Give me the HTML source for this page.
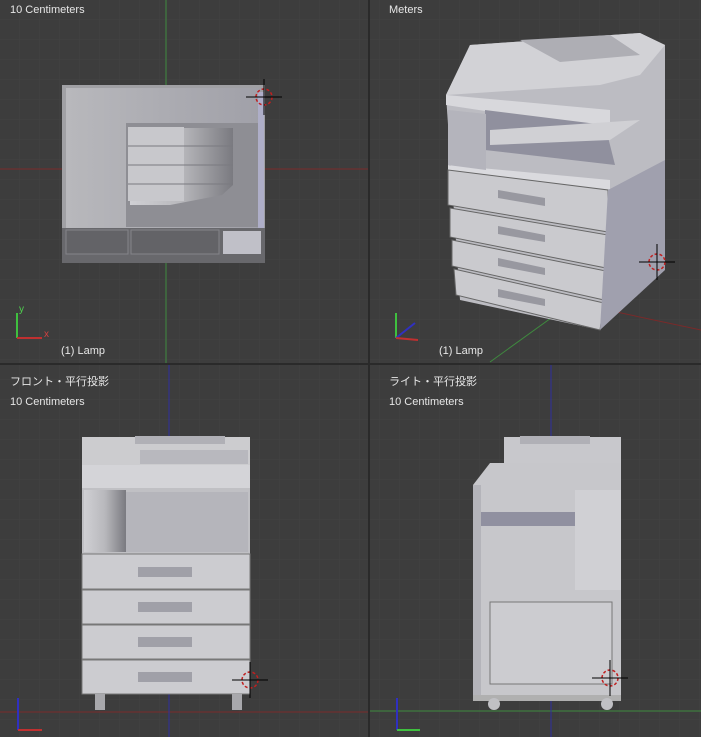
<!DOCTYPE html><html><head><meta charset="utf-8"><style>
body{margin:0;width:701px;height:737px;overflow:hidden;background:#393939;font-family:"Liberation Sans","Noto Sans CJK JP",sans-serif}
svg{display:block}
text{font-family:"Liberation Sans","Noto Sans CJK JP",sans-serif;font-size:11px;fill:#e6e6e6}
</style></head><body>
<svg width="701" height="737" viewBox="0 0 701 737">
<defs>
<pattern id="g" width="20" height="20" patternUnits="userSpaceOnUse"><path d="M20 0V20H0" fill="none" stroke="#424242" stroke-width="1"/></pattern>
<linearGradient id="bd" x1="0" y1="0" x2="1" y2="0"><stop offset="0" stop-color="#b8b8bc"/><stop offset="1" stop-color="#a0a0a8"/></linearGradient>
<linearGradient id="sh" x1="0" y1="0" x2="1" y2="0"><stop offset="0" stop-color="#d0d0d4"/><stop offset=".5" stop-color="#b8b8bc"/><stop offset="1" stop-color="#7a7a80"/></linearGradient>
</defs>
<rect width="701" height="737" fill="#3d3d3d"/>
<rect width="701" height="737" fill="url(#g)"/>
<rect x="368" y="0" width="2" height="737" fill="#2a2a2a"/>
<rect x="0" y="363" width="701" height="2" fill="#2a2a2a"/>

<!-- TL top view -->
<line x1="0" y1="169" x2="368" y2="169" fill="none" stroke="#7a2a2a"/>
<line x1="166" y1="0" x2="166" y2="363" stroke="#3f8a3f"/>
<rect x="62" y="85" width="203" height="178" fill="#a0a0a4"/>
<rect x="66" y="88" width="196" height="140" fill="url(#bd)"/>
<rect x="126" y="123" width="132" height="104" fill="#8e8e94"/>
<rect x="128" y="127" width="56" height="74" fill="#c8c8cc"/>
<path d="M184 128H233V185L222 195L170 205H130V201H184Z" fill="url(#sh)"/>
<path d="M128 146H233M128 165H233M128 184H233" stroke="#7a7a80"/>
<rect x="62" y="228" width="203" height="35" fill="#68686c"/>
<rect x="66" y="230" width="62" height="24" fill="#636367" stroke="#85858a"/>
<rect x="131" y="230" width="88" height="24" fill="#636367" stroke="#85858a"/>
<rect x="223" y="231" width="38" height="23" fill="#c0c0c8"/>
<rect x="258" y="92" width="6" height="136" fill="#aeaec8"/>
<text x="10" y="13">10 Centimeters</text>
<text x="61" y="354">(1) Lamp</text>
<path d="M17 338V313" stroke="#3fc03f" stroke-width="2"/><path d="M17 338H42" stroke="#c03030" stroke-width="2"/>
<text x="19" y="312" style="fill:#4fd04f;font-size:10px">y</text><text x="44" y="337" style="fill:#d04040;font-size:10px">x</text>
<g transform="translate(264,97)"><circle r="8" fill="none" stroke="#c02020" stroke-dasharray="3 2" stroke-width="1.5"/><path d="M-18 0H18M0-18V18" stroke="#000"/></g>

<!-- TR perspective -->
<line x1="560" y1="300" x2="701" y2="330" stroke="#7a2a2a"/>
<line x1="490" y1="362" x2="590" y2="290" stroke="#3f8a3f"/>
<path d="M446 95L470 45L640 33L665 45L665 195L600 330L460 300Z" fill="#bcbcc2"/>
<path d="M470 45L640 33L665 45L640 75L600 85L446 95Z" fill="#d2d2d6"/>
<path d="M520 40L610 35L640 55L560 62Z" fill="#aeaeb4"/>
<path d="M446 95L610 110L610 130L446 105Z" fill="#d8d8dc"/>
<path d="M485 110L605 125L615 165L485 150Z" fill="#90909e"/>
<path d="M490 130L640 120L610 140L490 145Z" fill="#d0d0d4"/>
<path d="M448 165L610 180L610 200L448 185Z" fill="#dadade"/>
<path d="M448 170L608 190L608 232L448 205Z" fill="#cacace" stroke="#666"/>
<path d="M450 208L608 235L606 268L450 237Z" fill="#cacace" stroke="#666"/>
<path d="M452 240L606 271L604 300L452 266Z" fill="#cacace" stroke="#666"/>
<path d="M454 269L604 303L600 330L456 295Z" fill="#cacace" stroke="#666"/>
<path d="M608 190L665 160L665 270L600 330Z" fill="#a0a0ae"/>
<path d="M498 190L545 198L545 206L498 198ZM498 226L545 235L545 242L498 234ZM498 258L545 268L545 275L498 266ZM498 289L545 299L545 306L498 297Z" fill="#9898a0"/>
<path d="M448 110L486 114L486 170L448 165Z" fill="#b4b4bc"/>
<text x="389" y="13">Meters</text>
<text x="439" y="354">(1) Lamp</text>
<path d="M396 338L396 313" stroke="#3fc03f" stroke-width="2"/><path d="M396 338L415 323" stroke="#3030c0" stroke-width="2"/><path d="M396 338L418 340" stroke="#c03030" stroke-width="2"/>
<g transform="translate(657,262)"><circle r="8" fill="none" stroke="#c02020" stroke-dasharray="3 2" stroke-width="1.5"/><path d="M-18 0H18M0-18V18" stroke="#000"/></g>

<!-- BL front -->
<line x1="0" y1="712" x2="368" y2="712" stroke="#7a2a2a"/>
<line x1="169" y1="365" x2="169" y2="737" stroke="#3030a0"/>
<rect x="82" y="437" width="168" height="28" fill="#cccccf"/>
<rect x="140" y="450" width="108" height="14" fill="#b8b8be"/>
<rect x="135" y="436" width="90" height="8" fill="#b0b0b6"/>
<rect x="82" y="465" width="168" height="23" fill="#d4d4d8"/>
<rect x="82" y="488" width="168" height="66" fill="#c0c0c4"/>
<rect x="84" y="490" width="42" height="62" fill="url(#sh)"/>
<rect x="126" y="492" width="122" height="60" fill="#b5b5bb"/>
<rect x="82" y="554" width="168" height="35" fill="#ccccd0" stroke="#777"/>
<rect x="82" y="590" width="168" height="34" fill="#ccccd0" stroke="#777"/>
<rect x="82" y="625" width="168" height="34" fill="#ccccd0" stroke="#777"/>
<rect x="82" y="660" width="168" height="34" fill="#ccccd0" stroke="#777"/>
<rect x="138" y="567" width="54" height="10" fill="#a0a0a8"/><rect x="138" y="602" width="54" height="10" fill="#a0a0a8"/><rect x="138" y="637" width="54" height="10" fill="#a0a0a8"/><rect x="138" y="672" width="54" height="10" fill="#a0a0a8"/>
<rect x="95" y="694" width="10" height="16" fill="#a8a8ac"/><rect x="232" y="694" width="10" height="16" fill="#a8a8ac"/>
<text x="10" y="385">フロント・平行投影</text>
<text x="10" y="405">10 Centimeters</text>
<path d="M18 730V698" stroke="#3030c0" stroke-width="2"/><path d="M18 730H42" stroke="#c03030" stroke-width="2"/>
<g transform="translate(250,680)"><circle r="8" fill="none" stroke="#c02020" stroke-dasharray="3 2" stroke-width="1.5"/><path d="M-18 0H18M0-18V18" stroke="#000"/></g>

<!-- BR right -->
<line x1="370" y1="711" x2="701" y2="711" stroke="#3f8a3f"/>
<line x1="551" y1="365" x2="551" y2="737" stroke="#3030a0"/>
<rect x="504" y="437" width="117" height="26" fill="#c8c8cc"/>
<rect x="520" y="436" width="70" height="8" fill="#b0b0b6"/>
<path d="M473 485L490 463H621V695H473Z" fill="#c7c7cb"/>
<rect x="473" y="485" width="8" height="210" fill="#b4b4ba"/>
<rect x="481" y="512" width="94" height="14" fill="#9090a0"/>
<rect x="575" y="490" width="46" height="100" fill="#d0d0d4"/>
<rect x="490" y="602" width="122" height="82" fill="#ccccd0" stroke="#777"/>
<rect x="473" y="695" width="148" height="6" fill="#b0b0b0"/>
<circle cx="494" cy="704" r="6" fill="#c0c0c4"/><circle cx="607" cy="704" r="6" fill="#c0c0c4"/>
<text x="389" y="385">ライト・平行投影</text>
<text x="389" y="405">10 Centimeters</text>
<path d="M397 730V698" stroke="#3030c0" stroke-width="2"/><path d="M397 730H420" stroke="#3fc03f" stroke-width="2"/>
<g transform="translate(610,678)"><circle r="8" fill="none" stroke="#c02020" stroke-dasharray="3 2" stroke-width="1.5"/><path d="M-18 0H18M0-18V18" stroke="#000"/></g>
</svg></body></html>
